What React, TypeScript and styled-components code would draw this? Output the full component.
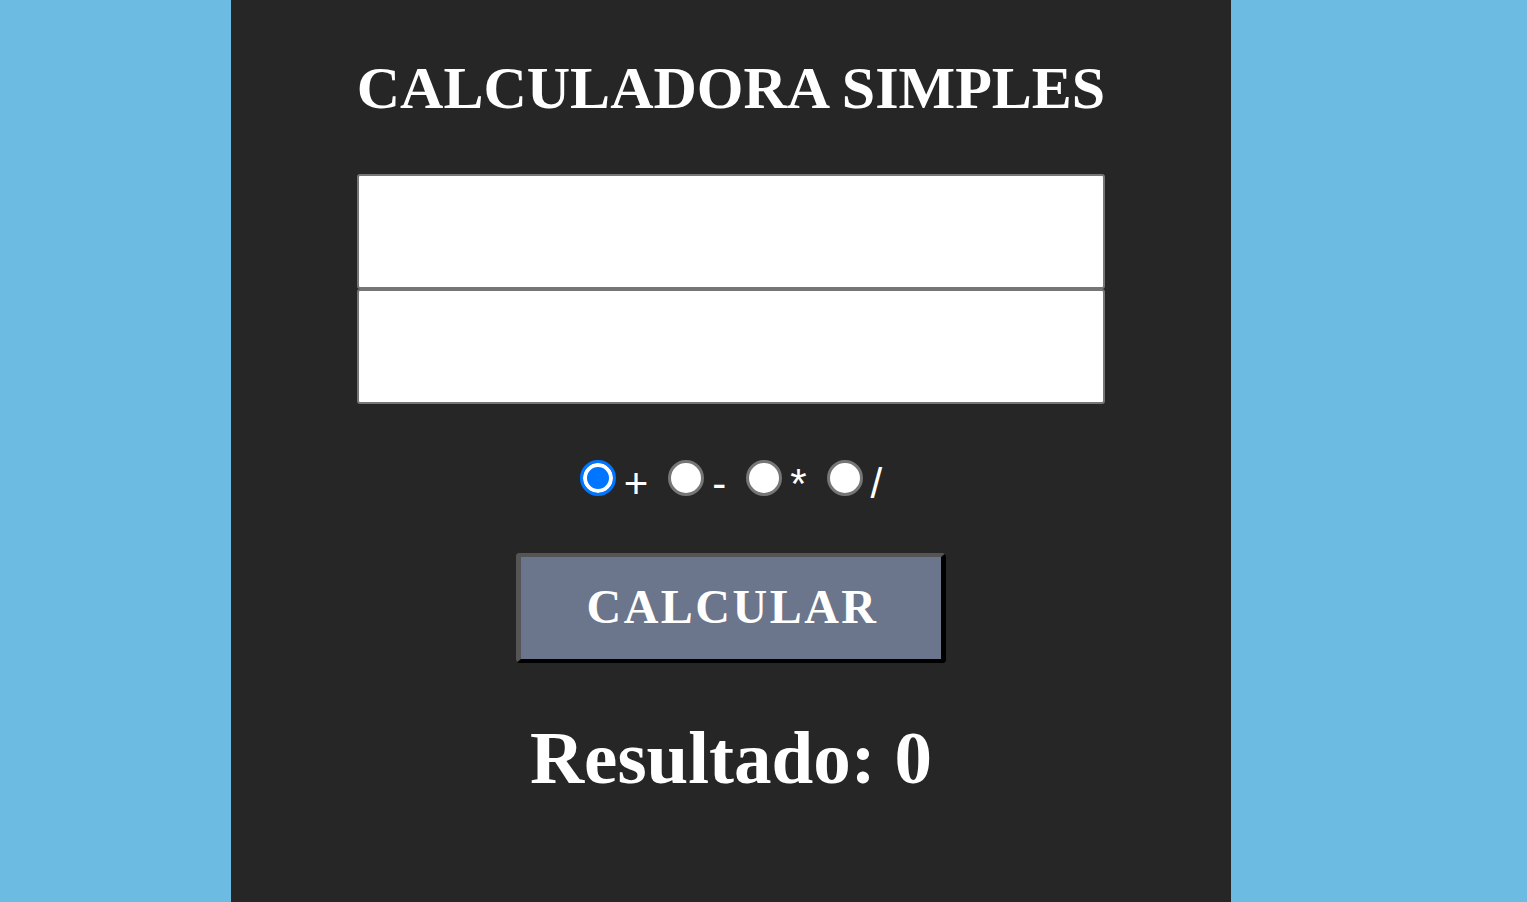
import { FunctionComponent, useState } from "react";
import styled, { createGlobalStyle } from "styled-components";

const GlobalStyle = createGlobalStyle`
  html, body {
    margin: 0;
    padding: 0;
    background-color: #6bbbe3;
  }
`;

const Page = styled.main`
  width: 1000px;
  min-height: 100vh;
  margin: 0 0 0 231px;
  background-color: #262626;
  display: flex;
  flex-direction: column;
  align-items: center;
  box-sizing: border-box;
  padding-top: 54px;
  font-family: "Liberation Serif", "Times New Roman", serif;
  color: #ffffff;
`;

const Title = styled.h1`
  margin: 0 0 51px;
  font-size: 60px;
  font-weight: bold;
  line-height: 69px;
`;

const Fields = styled.div`
  display: flex;
  flex-direction: column;
  width: 748px;
`;

const NumberInput = styled.input`
  box-sizing: border-box;
  width: 100%;
  height: 115px;
  margin: 0;
  border: 2px solid #767676;
  border-radius: 3px;
  background: #ffffff;
  font-size: 40px;
  padding: 0 12px;
  outline: none;
`;

const Operations = styled.div`
  display: flex;
  align-items: center;
  height: 36px;
  margin-top: 56px;
  font-family: "Liberation Sans", Arial, sans-serif;
  font-size: 42px;
`;

const Option = styled.label`
  display: flex;
  align-items: center;
  height: 36px;
  margin-right: 20px;
  &:last-child {
    margin-right: 0;
  }
`;

const Radio = styled.input`
  appearance: none;
  box-sizing: border-box;
  width: 36px;
  height: 36px;
  margin: 0 8px 0 0;
  border-radius: 50%;
  border: 3px solid #767676;
  background: #ffffff;
  cursor: pointer;
  &:checked {
    border-color: #0075ff;
    background: #0075ff;
    box-shadow: inset 0 0 0 4px #ffffff;
  }
`;

const Symbol = styled.span`
  position: relative;
  top: 6px;
  line-height: 36px;
`;

const CalcButton = styled.button`
  margin-top: 57px;
  width: 430px;
  height: 110px;
  box-sizing: border-box;
  background-color: #6b758b;
  border-style: solid;
  border-width: 4px 5px 4px 5px;
  border-color: #555555 #000000 #000000 #555555;
  border-radius: 4px;
  color: #ffffff;
  font-family: "Liberation Serif", "Times New Roman", serif;
  font-weight: bold;
  font-size: 48px;
  letter-spacing: 2.5px;
  padding: 0 0 4px 3px;
  cursor: pointer;
`;

const Result = styled.h2`
  margin: 52px 0 0;
  font-size: 75px;
  font-weight: bold;
  line-height: 1.15;
`;

const operations = ["+", "-", "*", "/"];

const App: FunctionComponent = () => {
  const [a, setA] = useState("");
  const [b, setB] = useState("");
  const [op, setOp] = useState("+");
  const [result, setResult] = useState<number>(0);

  const calcular = () => {
    const x = parseFloat(a) || 0;
    const y = parseFloat(b) || 0;
    if (op === "+") setResult(x + y);
    else if (op === "-") setResult(x - y);
    else if (op === "*") setResult(x * y);
    else setResult(y === 0 ? 0 : x / y);
  };

  return (
    <>
      <GlobalStyle />
      <Page>
        <Title>CALCULADORA SIMPLES</Title>
        <Fields>
          <NumberInput type="number" value={a} onChange={(e) => setA(e.target.value)} />
          <NumberInput type="number" value={b} onChange={(e) => setB(e.target.value)} />
        </Fields>
        <Operations>
          {operations.map((o) => (
            <Option key={o}>
              <Radio
                type="radio"
                name="op"
                checked={op === o}
                onChange={() => setOp(o)}
              />
              <Symbol>{o}</Symbol>
            </Option>
          ))}
        </Operations>
        <CalcButton onClick={calcular}>CALCULAR</CalcButton>
        <Result>Resultado: {result}</Result>
      </Page>
    </>
  );
};

export default App;
